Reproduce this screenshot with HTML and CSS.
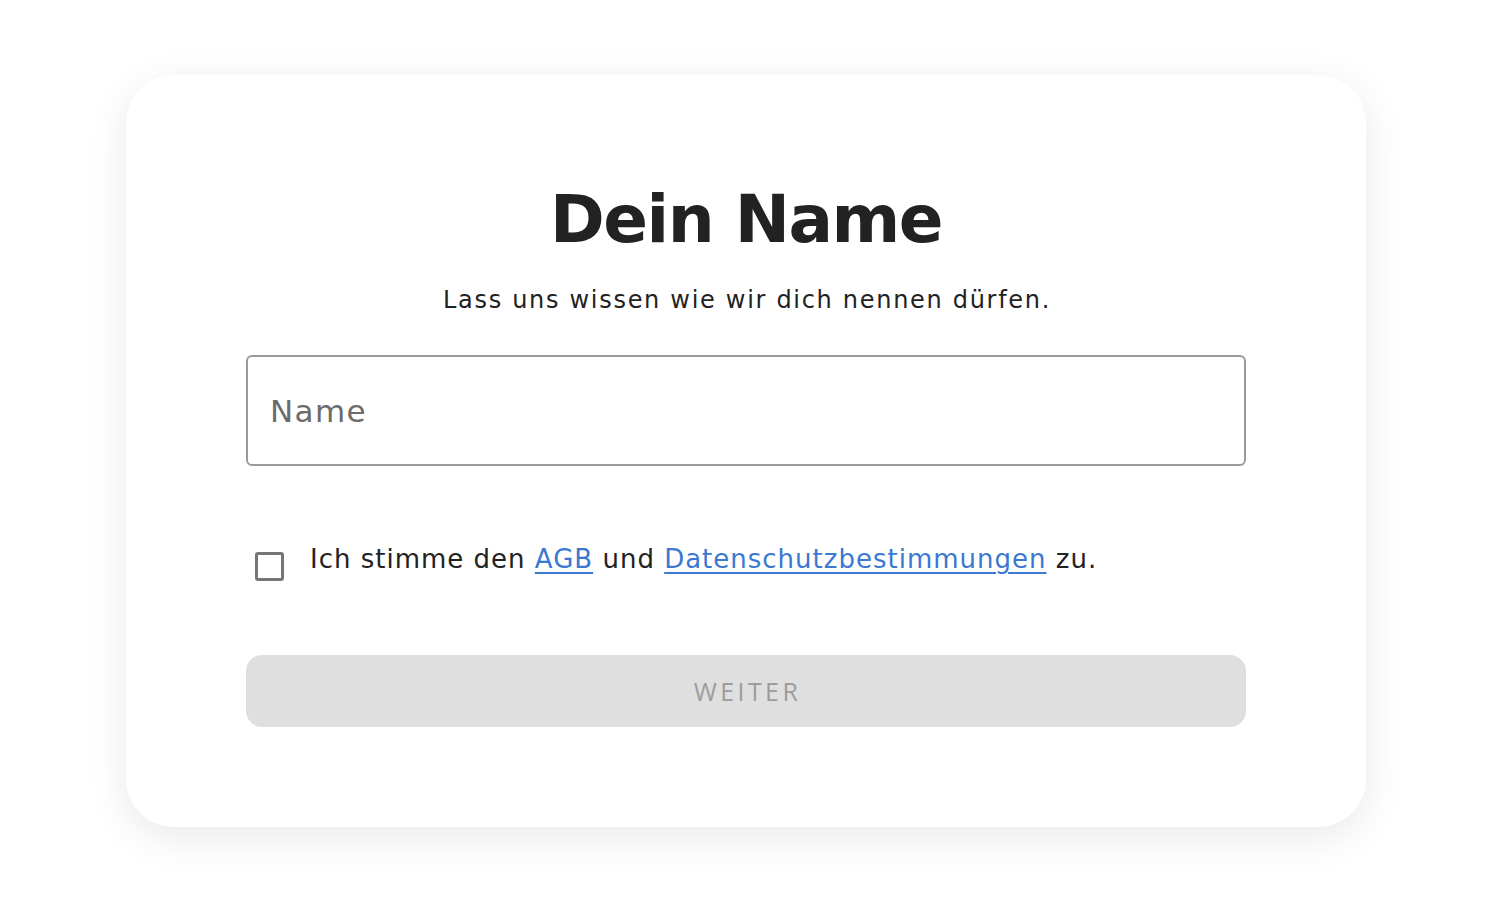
FILE: index.html
```html
<!DOCTYPE html>
<html lang="de">
<head>
<meta charset="utf-8">
<title>Dein Name</title>
<link rel="stylesheet" href="styles.css">
</head>
<body>
<div class="page">
  <main class="card">
    <h1 class="title">Dein Name</h1>
    <p class="subtitle">Lass uns wissen wie wir dich nennen dürfen.</p>
    <input class="name-input" type="text" placeholder="Name">
    <label class="consent">
      <span class="checkbox"></span>
      <span class="consent-text">Ich stimme den <a href="#" class="link">AGB</a> und <a href="#" class="link">Datenschutzbestimmungen</a> zu.</span>
    </label>
    <button class="btn" type="button">WEITER</button>
  </main>
</div>
</body>
</html>
```
FILE: styles.css
```css
* { box-sizing: border-box; }
html, body { margin: 0; padding: 0; background: #ffffff; }
body { font-family: "DejaVu Sans", "Noto Sans", sans-serif; color: #222222; }

.page {
  padding: 75px 138px 73px 126px;
}

.card {
  width: 1240px;
  height: 752px;
  background: #ffffff;
  border-radius: 48px;
  box-shadow: 0 10px 40px rgba(0, 0, 0, 0.09);
  padding: 105px 120px 100px;
  display: flex;
  flex-direction: column;
  align-items: stretch;
}

.title {
  margin: 0;
  font-size: 66px;
  line-height: 80px;
  height: 80px;
  font-weight: 700;
  text-align: center;
  letter-spacing: -1.5px;
  color: #222222;
}

.subtitle {
  margin: 24px 0 0;
  font-size: 24px;
  line-height: 32px;
  height: 32px;
  text-align: center;
  letter-spacing: 1.7px;
  padding-left: 2px;
  color: #222222;
}

.name-input {
  margin-top: 39px;
  height: 111px;
  width: 100%;
  border: 2px solid #9b9b9b;
  border-radius: 6px;
  padding: 0 22px;
  font-family: "DejaVu Sans", "Noto Sans", sans-serif;
  font-size: 31px;
  letter-spacing: 1.4px;
  color: #222222;
  outline: none;
}
.name-input::placeholder { color: #6b6b6b; }

.consent {
  margin-top: 75px;
  display: flex;
  align-items: flex-start;
  gap: 26px;
  padding-left: 9px;
  height: 36px;
}

.checkbox {
  flex: none;
  margin-top: 11px;
  width: 29px;
  height: 29px;
  border: 3px solid #767676;
  border-radius: 3px;
}

.consent-text {
  font-size: 26px;
  line-height: 36px;
  letter-spacing: 1px;
  color: #222222;
}

.link {
  color: #3a78d2;
  text-decoration: underline;
  text-underline-offset: 4px;
  text-decoration-thickness: 1.5px;
}

.btn {
  margin-top: 78px;
  height: 72px;
  width: 100%;
  border: none;
  border-radius: 16px;
  background: #dfdfdf;
  color: #9c9c9c;
  font-family: "Open Sans", "Noto Sans", sans-serif;
  font-size: 25px;
  letter-spacing: 3.4px;
  padding: 0 0 0 3px;
  cursor: default;
}
```
